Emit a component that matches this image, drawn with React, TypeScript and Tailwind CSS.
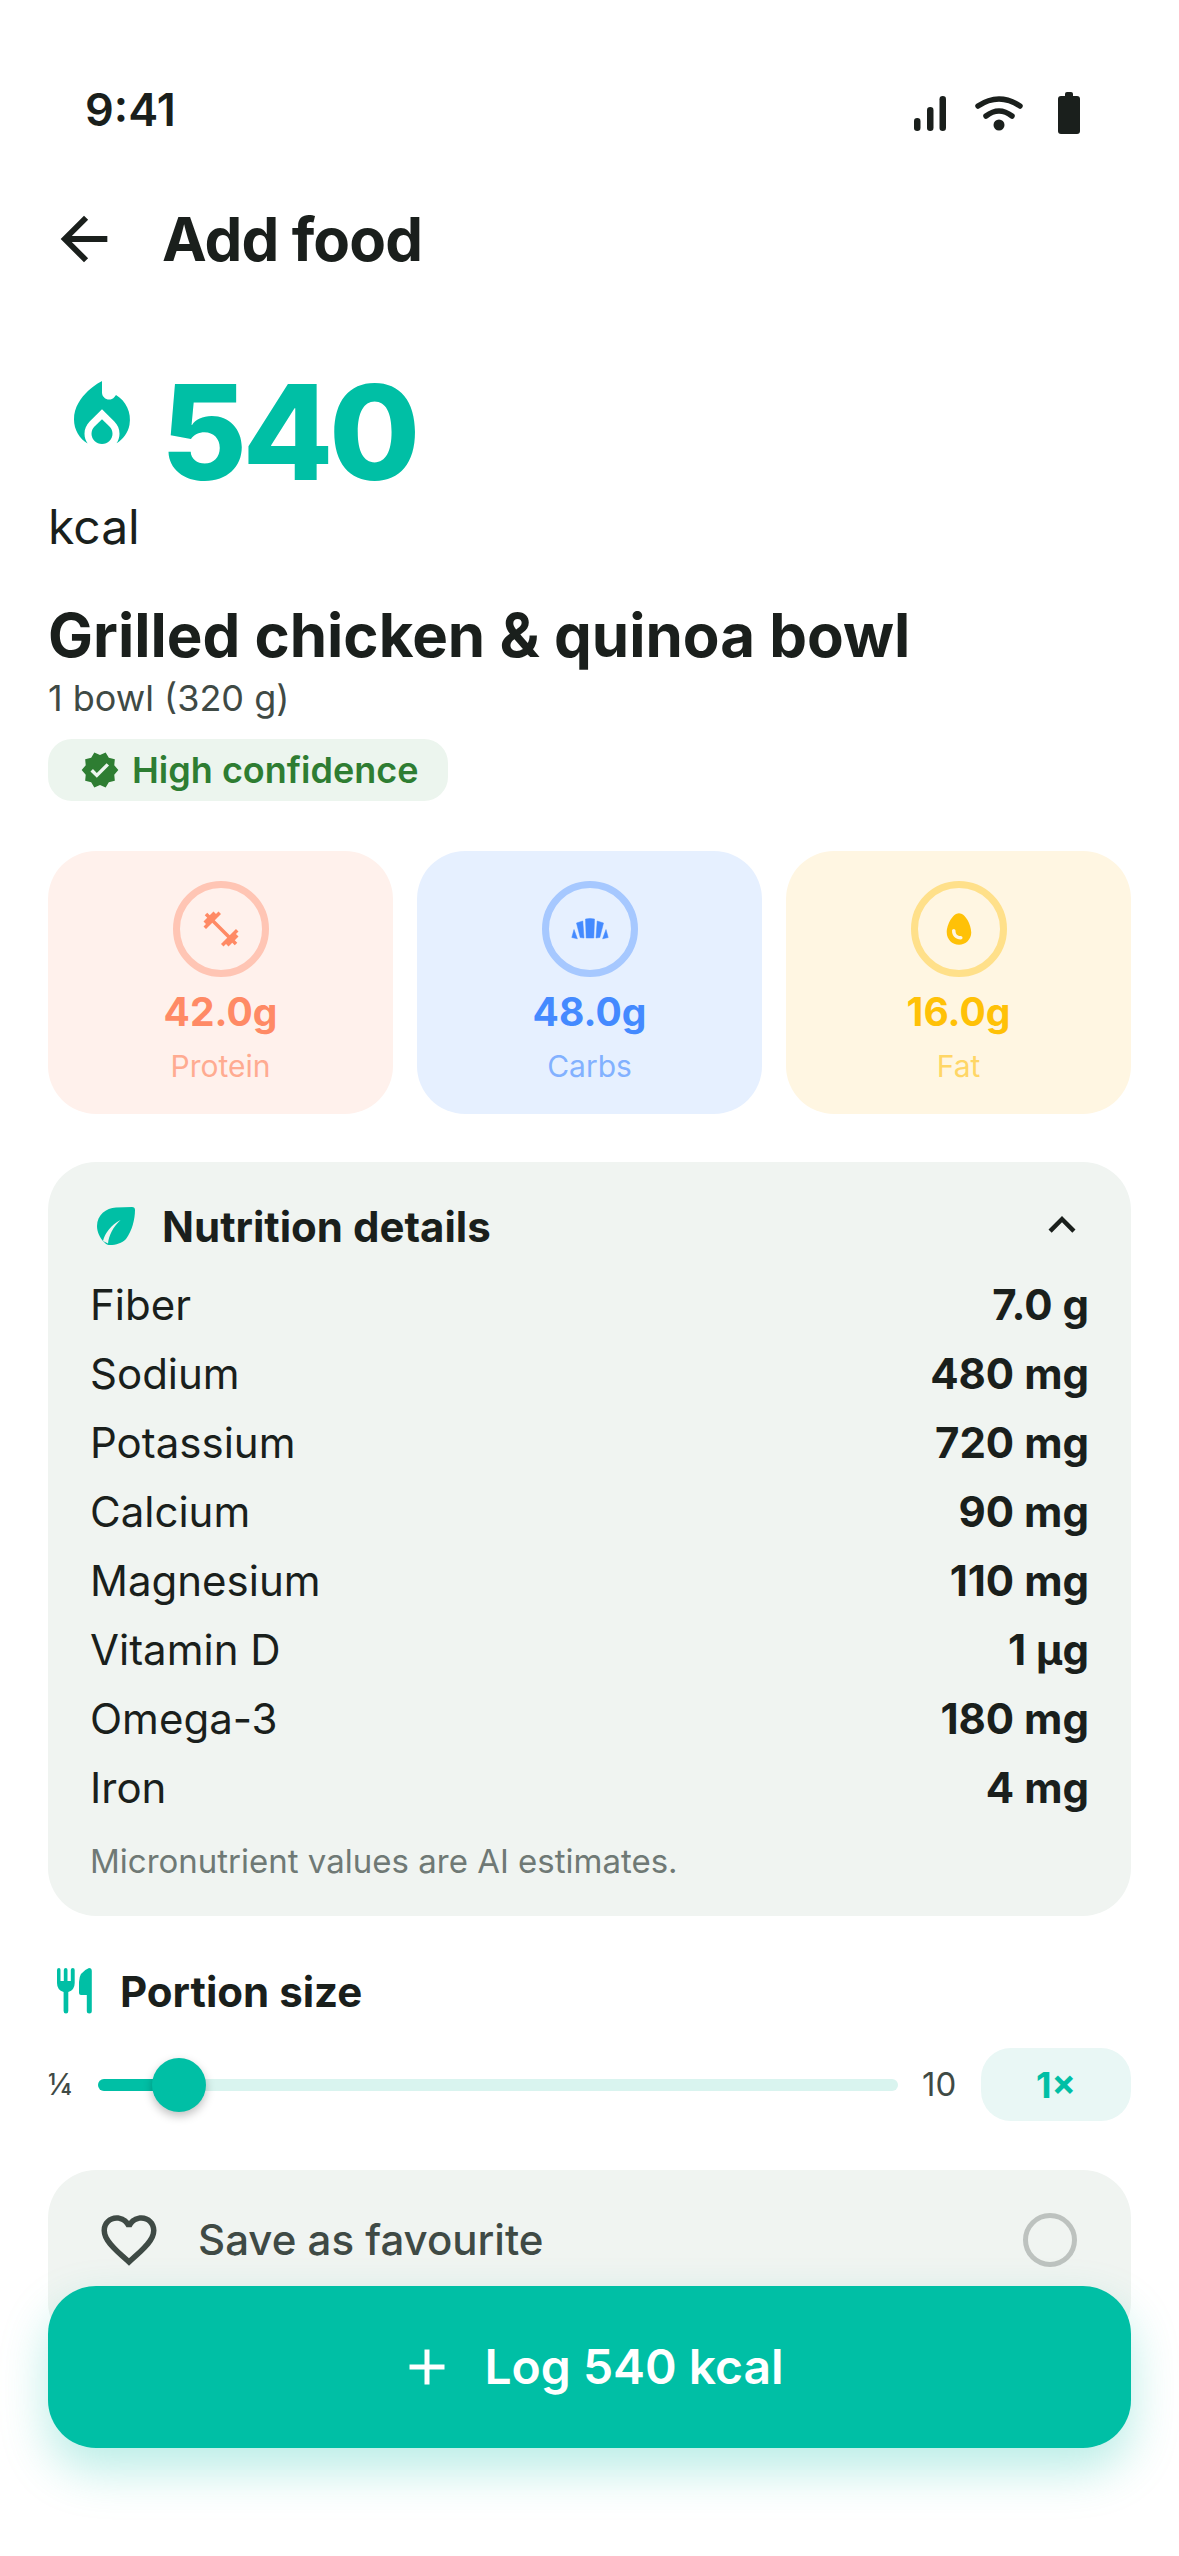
import {
  MdAdd,
  MdArrowBack,
  MdEgg,
  MdExpandLess,
  MdFavoriteBorder,
  MdFitnessCenter,
  MdLocalFireDepartment,
  MdVerified,
} from "react-icons/md";

const nutrition = [
  ["Fiber", "7.0 g"],
  ["Sodium", "480 mg"],
  ["Potassium", "720 mg"],
  ["Calcium", "90 mg"],
  ["Magnesium", "110 mg"],
  ["Vitamin D", "1 µg"],
  ["Omega-3", "180 mg"],
  ["Iron", "4 mg"],
];

function StatusIcons() {
  return (
    <div className="mt-[5px] flex items-center text-[#1a1f1c]">
      {/* signal */}
      <svg width="32" height="36" viewBox="0 0 32 36" fill="currentColor">
        <rect x="0" y="23" width="6.5" height="13" rx="3.2" />
        <rect x="13" y="12" width="6.5" height="24" rx="3.2" />
        <rect x="25.5" y="1" width="6.5" height="35" rx="3.2" />
      </svg>
      {/* wifi */}
      <svg width="48" height="36" viewBox="0 0 48 36" fill="none" stroke="currentColor" strokeWidth="5.5" strokeLinecap="round" className="ml-[29px]">
        <path d="M3 11 Q24 -3 45 11" />
        <path d="M11 21 Q24 11 37 21" />
        <circle cx="24" cy="30" r="5.5" fill="currentColor" stroke="none" />
      </svg>
      {/* battery */}
      <svg width="22" height="42" viewBox="0 0 22 42" fill="currentColor" className="ml-[35px]">
        <rect x="7" y="0" width="8" height="6" rx="2" />
        <rect x="0" y="4" width="22" height="38" rx="3" />
      </svg>
    </div>
  );
}

function CroissantIcon() {
  return (
    <svg width="38" height="24" viewBox="0 0 38 24" fill="#448aff" stroke="#448aff" strokeWidth="0.5" strokeLinejoin="round">
      <path d="M14.5 2 Q19 .8 23.5 2 L22.8 21 L15.2 21 Z" />
      <path d="M5.5 6 L11.8 4 L13 21 L9.2 20.5 Z" />
      <path d="M32.5 6 L26.2 4 L25 21 L28.8 20.5 Z" />
      <path d="M3 12.5 L.8 20.5 L6.4 21.8 Z" />
      <path d="M35 12.5 L37.2 20.5 L31.6 21.8 Z" />
    </svg>
  );
}

function LeafIcon() {
  return (
    <svg width="38" height="38" viewBox="0 0 38 38" className="ml-[7px] shrink-0">
      <path
        d="M35 0 C37 0 38 1 38 3 C38 12 35 24 29 32 C25 36 19 38 13 38 C11 38 9 37.5 7 35 C3 31 0 25 0 19 C0 8 9 1 19 0.5 Z"
        fill="#00bfa5"
      />
      <path d="M23.5 13 C14 18 8 26 6 34 L11 36.5 C12 28 16 20 23.5 13 Z" fill="#f0f4f1" />
    </svg>
  );
}

function CutleryIcon() {
  return (
    <svg width="35" height="46" viewBox="0 0 35 46" fill="#00bfa5" className="ml-[9px] shrink-0">
      <path d="M0 2 Q0 0 2 0 Q3.5 0 3.5 2 V13 H6.8 V2 Q6.8 0 8.8 0 Q10.5 0 10.5 2 V13 H13.8 V2 Q13.8 0 15.8 0 Q17.7 0 17.7 2 V15 Q17.7 22 11.3 24 V43 Q11.3 45.5 9 45.5 Q6.6 45.5 6.6 43 V24 Q0 22 0 15 Z" />
      <path d="M32 0 Q34.8 0 34.8 3 V43 Q34.8 45.5 32.3 45.5 Q29.8 45.5 29.8 43 V27 H24 Q22 27 22 25 V14 Q22 4 32 0 Z" />
    </svg>
  );
}

function MacroCard({
  value,
  label,
  icon,
  className,
  ring,
  valueColor,
  labelColor,
}: {
  value: string;
  label: string;
  icon: React.ReactNode;
  className: string;
  ring: string;
  valueColor: string;
  labelColor: string;
}) {
  return (
    <div className={`flex h-[263px] flex-col items-center rounded-[48px] pt-[30px] ${className}`}>
      <div className={`flex size-[96px] items-center justify-center rounded-full border-[7px] ${ring}`}>{icon}</div>
      <p className={`mt-[10px] text-[39px] leading-[50px] font-bold ${valueColor}`}>{value}</p>
      <p className={`mt-[8px] text-[30px] leading-[42px] ${labelColor}`}>{label}</p>
    </div>
  );
}

export default function App() {
  return (
    <div className="relative h-[2556px] w-[1179px] overflow-hidden bg-white font-['Inter',sans-serif] text-[#1a1f1c]">
      {/* status bar */}
      <div className="flex items-center justify-between pt-[85px] pr-[99px] pl-[85px]">
        <span className="text-[45px] leading-[50px] font-semibold">9:41</span>
        <StatusIcons />
      </div>

      {/* header */}
      <div className="mt-[64px] flex items-center pl-[49px]">
        <MdArrowBack size={70} className="shrink-0" />
        <h1 className="ml-[43px] text-[60px] leading-[80px] font-bold tracking-[-0.9px]">Add food</h1>
      </div>

      <main className="px-[48px]">
        {/* calories */}
        <div className="mt-[80px] flex items-center">
          <MdLocalFireDepartment size={84} className="mb-[32px] ml-[12px] text-[#00bfa5]" />
          <span className="ml-[17px] text-[132px] leading-[146px] font-extrabold tracking-[-4.5px] text-[#00bfa5]">540</span>
        </div>
        <p className="mt-[-8px] text-[48px] leading-[60px]">kcal</p>

        <h2 className="mt-[42px] text-[60px] leading-[72px] font-bold">Grilled chicken &amp; quinoa bowl</h2>
        <p className="mt-[3px] text-[36px] leading-[48px] text-[#3f4a45]">1 bowl (320 g)</p>

        <div className="mt-[17px] flex h-[62px] w-[400px] items-center gap-[12px] rounded-[24px] bg-[#ecf5ee] pl-[32px] text-[36px] font-semibold text-[#2e7d32]">
          <MdVerified size={40} />
          <span>High confidence</span>
        </div>

        {/* macros */}
        <div className="mt-[50px] grid grid-cols-3 gap-[24px]">
          <MacroCard
            value="42.0g"
            label="Protein"
            icon={<MdFitnessCenter size={42} className="text-[#ff8a65]" />}
            className="bg-[#fff1ec]"
            ring="border-[#ffc5b4]"
            valueColor="text-[#ff8a65]"
            labelColor="text-[#ffab91]"
          />
          <MacroCard
            value="48.0g"
            label="Carbs"
            icon={<CroissantIcon />}
            className="bg-[#e6f0ff]"
            ring="border-[#a6c8ff]"
            valueColor="text-[#448aff]"
            labelColor="text-[#82b1ff]"
          />
          <MacroCard
            value="16.0g"
            label="Fat"
            icon={<MdEgg size={42} className="text-[#ffc107]" />}
            className="bg-[#fff6e2]"
            ring="border-[#ffe08a]"
            valueColor="text-[#ffc107]"
            labelColor="text-[#ffd666]"
          />
        </div>

        {/* nutrition details */}
        <section className="mt-[48px] h-[754px] rounded-[48px] bg-[#f0f4f1] px-[42px] pt-[42px]">
          <div className="flex h-[44px] items-center">
            <LeafIcon />
            <h3 className="ml-[27px] text-[42px] font-bold">Nutrition details</h3>
            <MdExpandLess size={54} className="mt-[-2px] ml-auto" />
          </div>
          <ul className="mt-[22px]">
            {nutrition.map(([name, amount]) => (
              <li key={name} className="flex h-[69px] items-center justify-between text-[42px]">
                <span>{name}</span>
                <span className="font-bold">{amount}</span>
              </li>
            ))}
          </ul>
          <p className="mt-[15px] text-[33px] leading-[48px] text-[#6f7975]">Micronutrient values are AI estimates.</p>
        </section>

        {/* portion size */}
        <div className="mt-[53px] flex h-[44px] items-center">
          <CutleryIcon />
          <h3 className="ml-[28px] text-[42px] font-bold">Portion size</h3>
        </div>
        <div className="mt-[35px] flex h-[73px] items-center">
          <span className="w-[50px] text-[30px] text-[#3f4a45]">¼</span>
          <div className="relative h-[12px] w-[800px] rounded-full bg-[#d9f4ef]">
            <div className="h-full w-[80px] rounded-full bg-[#00bfa5]" />
            <div className="absolute top-1/2 left-[54px] size-[54px] -translate-y-1/2 rounded-full bg-[#00bfa5] shadow-[0_4px_10px_rgba(0,0,0,0.25)]" />
          </div>
          <span className="ml-[24px] text-[33px] text-[#3f4a45]">10</span>
          <div className="ml-auto flex h-[73px] w-[150px] items-center justify-center rounded-[30px] bg-[#e9f7f5] text-[36px] font-bold text-[#00bfa5]">
            1×
          </div>
        </div>

        {/* favourite */}
        <div className="mt-[49px] flex h-[180px] items-start rounded-[48px] bg-[#f0f4f1] pt-[42px] pr-[54px] pl-[48px]">
          <MdFavoriteBorder size={66} className="mt-[-5px] text-[#3f4a45]" />
          <span className="ml-[36px] text-[42px] leading-[56px] font-medium text-[#3f4a45]">Save as favourite</span>
          <div className="mt-[1px] ml-auto size-[54px] rounded-full border-[5px] border-[#bdc2bf]" />
        </div>
      </main>

      {/* log button sits over the page */}
      <button className="absolute top-[2286px] left-[48px] flex h-[162px] w-[1083px] items-center justify-center gap-[27px] rounded-[48px] bg-[#00bfa5] pl-[2px] text-[48px] font-semibold text-white shadow-[0_22px_48px_rgba(0,191,165,0.28)]">
        <MdAdd size={60} />
        <span>Log 540 kcal</span>
      </button>
    </div>
  );
}
